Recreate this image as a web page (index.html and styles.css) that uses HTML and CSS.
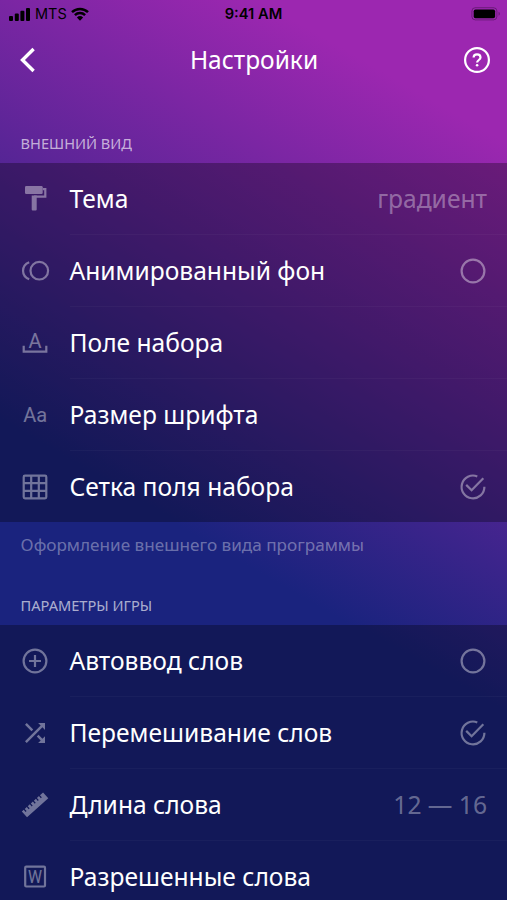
FILE: index.html
```html
<!DOCTYPE html>
<html lang="ru">
<head>
    <meta charset="UTF-8">
    <meta name="viewport" content="width=device-width, initial-scale=1.0">
    <title>Настройки</title>
    <link rel="stylesheet" href="styles.css">
</head>
<body>
    <div class="status-bar">
        <div class="carrier">
            <svg class="signal" width="22" height="14" viewBox="0 0 22 14">
                <rect x="0" y="9" width="4" height="5" rx="1"/>
                <rect x="5.8" y="6.5" width="4" height="7.5" rx="1"/>
                <rect x="11.4" y="3.8" width="4" height="10.2" rx="1"/>
                <rect x="17" y="1" width="4" height="13" rx="1"/>
            </svg>
            <span>MTS</span>
            <svg class="wifi" width="18" height="14" viewBox="0 0 18 14">
                <path d="M1 5.1a11.6 11.6 0 0 1 16 0M3.9 8.1a7.4 7.4 0 0 1 10.2 0" fill="none" stroke="#000" stroke-width="2.5"/>
                <path d="M9 13.8 5.9 10.5a4.6 4.6 0 0 1 6.2 0z"/>
            </svg>
        </div>
        <span class="time">9:41 AM</span>
        <svg class="battery" width="30" height="14" viewBox="0 0 30 14">
            <rect x=".9" y=".7" width="25" height="12.2" rx="3.4" fill="none" stroke="#000" stroke-opacity=".3"/>
            <rect x="2.7" y="2.4" width="21.4" height="8.8" rx="1.8"/>
            <path d="M27.6 4.8v4c1.6-.6 1.6-3.4 0-4z" opacity=".35"/>
        </svg>
    </div>

    <header class="header">
        <svg class="back" width="16" height="26" viewBox="0 0 16 26">
            <path d="M13.6 2 2.5 13l11.1 11"/>
        </svg>
        <h1>Настройки</h1>
        <svg class="help" width="28" height="28" viewBox="0 0 28 28">
            <circle cx="14" cy="14" r="11.9"/>
            <path d="M10.6 11.5c0-4.2 6.9-4.2 6.9 0 0 2.4-3.4 2.6-3.4 5"/>
            <circle class="dot" cx="14.1" cy="19.2" r="1.3"/>
        </svg>
    </header>

    <main>
        <h2>Внешний вид</h2>
        <ul class="group">
            <li>
                <svg class="icon" viewBox="0 0 30 30">
                    <rect class="fill" x="5" y="2" width="17.7" height="8" rx="1.2"/>
                    <path d="M22.7 5.2h2.6v7.4H14"/>
                    <path class="fill" d="M11.7 11.6h5v14a1 1 0 0 1-1 1h-3a1 1 0 0 1-1-1z"/>
                </svg>
                <div class="row"><span>Тема</span><span class="value">градиент</span></div>
            </li>
            <li>
                <svg class="icon" viewBox="0 0 30 30">
                    <circle cx="19.3" cy="14.7" r="8.8"/>
                    <path d="M9.2 6.2C1 9.4 1 20 9.2 23.2"/>
                </svg>
                <div class="row"><span>Анимированный фон</span>
                    <svg class="icon" viewBox="0 0 30 30"><circle cx="15" cy="15" r="11.4"/></svg>
                </div>
            </li>
            <li>
                <svg class="icon" viewBox="0 0 30 30">
                    <path d="M3.7 17.7v6h22.6v-6"/>
                    <text x="15" y="19.8" font-size="20">A</text>
                </svg>
                <div class="row"><span>Поле набора</span></div>
            </li>
            <li>
                <svg class="icon" viewBox="0 0 30 30"><text x="15.2" y="22" font-size="20">Aa</text></svg>
                <div class="row"><span>Размер шрифта</span></div>
            </li>
            <li>
                <svg class="icon" viewBox="0 0 30 30">
                    <path d="M5 3.7h20q1.3 0 1.3 1.3v20q0 1.3-1.3 1.3H5q-1.3 0-1.3-1.3V5q0-1.3 1.3-1.3zM11.2 3.7v22.6M18.8 3.7v22.6M3.7 11.2h22.6M3.7 18.8h22.6"/>
                </svg>
                <div class="row"><span>Сетка поля набора</span>
                    <svg class="icon" viewBox="0 0 30 30">
                        <path d="M19.3 4.4A11.4 11.4 0 1 0 26.4 14.8M8.2 12.9l5.4 5.4L25.3 6.2"/>
                    </svg>
                </div>
            </li>
        </ul>
        <p class="note">Оформление внешнего вида программы</p>

        <h2>Параметры игры</h2>
        <ul class="group">
            <li>
                <svg class="icon" viewBox="0 0 30 30">
                    <circle cx="15" cy="15" r="11.4"/>
                    <path d="M15 9v12M9 15h12"/>
                </svg>
                <div class="row"><span>Автоввод слов</span>
                    <svg class="icon" viewBox="0 0 30 30"><circle cx="15" cy="15" r="11.4"/></svg>
                </div>
            </li>
            <li>
                <svg class="icon" viewBox="0 0 24 24">
                    <path class="fill" d="M10.59 9.17L5.41 4 4 5.41l5.17 5.17 1.42-1.41zM14.5 4l2.04 2.04L4 18.59 5.41 20 17.96 7.46 20 9.5V4h-5.5zm.33 9.41l-1.41 1.41 3.13 3.13L14.5 20H20v-5.5l-2.04 2.04-3.13-3.13z"/>
                </svg>
                <div class="row"><span>Перемешивание слов</span>
                    <svg class="icon" viewBox="0 0 30 30">
                        <path d="M19.3 4.4A11.4 11.4 0 1 0 26.4 14.8M8.2 12.9l5.4 5.4L25.3 6.2"/>
                    </svg>
                </div>
            </li>
            <li>
                <svg class="icon" viewBox="0 0 30 30">
                    <g transform="translate(15.2 14.6) rotate(-42)">
                        <path class="fill" d="M-14.6-3.8h2.6v2.8h1.3v-2.8h2.8v2.8h1.3v-2.8h2.8v2.8h1.3v-2.8h2.8v2.8h1.3v-2.8h2.8v2.8h1.3v-2.8h2.8v2.8h1.3v-2.8h4.2v7.8h-28.6z"/>
                    </g>
                </svg>
                <div class="row"><span>Длина слова</span><span class="value">12 — 16</span></div>
            </li>
            <li>
                <svg class="icon" viewBox="0 0 30 30">
                    <rect x="5.2" y="4.7" width="19.8" height="19.8" rx="1"/>
                    <text x="15.1" y="20.6" font-size="17.5" textLength="14" lengthAdjust="spacingAndGlyphs">W</text>
                </svg>
                <div class="row"><span>Разрешенные слова</span></div>
            </li>
        </ul>
    </main>
</body>
</html>
```
FILE: styles.css
```css
* {
    box-sizing: border-box;
}
body {
    margin: 0;
    height: 900px;
    overflow: hidden;
    color: #fff;
    font-family: "Noto Sans", sans-serif;
    background: linear-gradient(210deg, #9c27b0 12%, #1a237e 60%);
}
.status-bar {
    display: grid;
    grid-template-columns: 1fr auto 1fr;
    align-items: center;
    height: 27px;
    padding: 0 6px 0 9px;
    color: #000;
    font: 14.5px Inter, sans-serif;
}
.carrier {
    display: flex;
    align-items: center;
    gap: 4px;
}
.time {
    margin-right: 3px;
    font-weight: 600;
    font-size: 14.7px;
}
.battery {
    justify-self: end;
}
.header {
    display: flex;
    align-items: center;
    justify-content: space-between;
    height: 66px;
    padding: 0 16px 0 20px;
}
.header svg {
    fill: none;
    stroke: #fff;
    stroke-width: 2.2;
}
.header .back {
    stroke-width: 3.4;
    margin-right: 9px;
}
.header .dot {
    fill: #fff;
    stroke: none;
}
h1 {
    margin: 0;
    padding-bottom: 2px;
    font-size: 24.5px;
    font-weight: 400;
}
h2 {
    margin: 0;
    height: 70px;
    padding: 40px 20.6px 0;
    font-size: 14.6px;
    line-height: 20px;
    font-weight: 400;
    text-transform: uppercase;
    color: rgba(255, 255, 255, 0.65);
}
.group {
    list-style: none;
    margin: 0;
    padding: 0;
    background: rgba(0, 0, 0, 0.3);
}
.group li {
    display: flex;
    align-items: center;
    height: 72px;
    padding-left: 20px;
}
.group li:last-child {
    height: 71px;
}
.row {
    flex: 1;
    display: flex;
    align-items: center;
    justify-content: space-between;
    height: 100%;
    margin-left: 19.5px;
    padding-right: 20px;
    border-bottom: 1px solid rgba(255, 255, 255, 0.03);
    font-size: 24.6px;
}
.row span {
    padding-bottom: 1px;
}
.group li:last-child .row {
    border-bottom: none;
}
.icon {
    width: 30px;
    height: 30px;
    fill: none;
    stroke: #fff;
    stroke-width: 2.2;
    opacity: 0.4;
}
.row .icon {
    margin-right: -0.5px;
}
.icon .fill {
    fill: #fff;
    stroke: none;
}
.icon text {
    fill: #fff;
    stroke: none;
    font-family: Roboto, sans-serif;
    text-anchor: middle;
}
.row .value {
    color: rgba(255, 255, 255, 0.37);
}
.note {
    margin: 0;
    height: 33px;
    padding: 12px 20.6px 0;
    font-size: 17.15px;
    line-height: 22px;
    color: rgba(255, 255, 255, 0.37);
}
```
